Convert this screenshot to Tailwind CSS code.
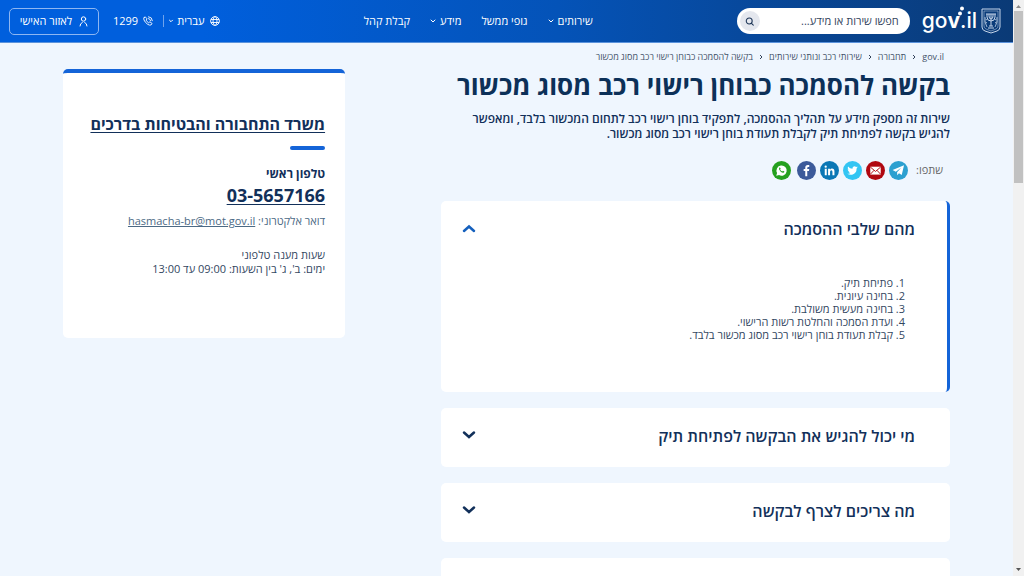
<!DOCTYPE html>
<html lang="he" dir="rtl">
<head>
<meta charset="utf-8">
<meta name="viewport" content="width=device-width, initial-scale=1">
<title>בקשה להסמכה כבוחן רישוי רכב מסוג מכשור</title>
<script src="https://cdn.jsdelivr.net/npm/@tailwindcss/browser@4"></script>
</head>
<body class="flex h-screen overflow-hidden bg-[#eff6fe] font-['Open_Sans','Liberation_Sans',sans-serif] text-[#12305a]">

<!-- Scrollbar -->
<div class="flex w-[11px] shrink-0 flex-col items-center justify-between bg-[#f1f1f1]" aria-hidden="true">
  <div class="flex w-full flex-col items-center">
    <svg class="h-[11px] w-[7px]" viewBox="0 0 7 11"><path d="M1 8l2.500-3 2.500 3z" fill="#8a8a8a"/></svg>
    <div class="h-[172px] w-[9px] bg-[#c1c1c1]"></div>
  </div>
  <svg class="h-[12px] w-[7px]" viewBox="0 0 7 12"><path d="M1 4l2.500 3L6 4z" fill="#555"/></svg>
</div>

<div class="flex min-w-0 flex-1 flex-col">
  <header class="flex h-[43px] shrink-0 items-center border-b border-[#5b93dc] bg-linear-to-l from-[#0a3a76] via-[#0453b8] via-45% to-[#005fdd] to-80% pr-3 pl-[9px] text-[11px] text-white">
    <a href="#" class="flex items-center gap-1" aria-label="gov.il">
      <svg class="h-[26px] w-[20px]" viewBox="0 0 20 26" fill="none" stroke="#c5d5ea" stroke-width="1">
        <path d="M1 1h18v18q0 3-3 4l-6 2-6-2q-3-1-3-4z"/>
        <path d="M3 3h14v15q0 2-2 3l-5 2-5-2q-2-1-2-3z" stroke-width=".5"/>
        <path d="M10 6v12M7 20h6M8 18h4M6 6v3q0 4 4 4t4-4V6M8 6v2q0 3 2 3t2-3V6M5 6h10"/>
        <path d="M4 9q-1 5 2 10M16 9q1 5-2 10M4.500 11l1.500 1M4.500 14l1.500 1M15.500 11L14 12M15.500 14L14 15" stroke-width=".8"/>
      </svg>
      <span dir="ltr" class="relative font-['Inter',sans-serif] text-[21px] leading-[30px] font-medium">go<span class="font-bold">v</span>.il
        <svg class="absolute top-0 left-[32px] h-[12px] w-[14px]" viewBox="0 0 14 12" fill="#fff"><circle cx="8" cy="2.500" r="2"/><circle cx="6" cy="7.500" r="2"/></svg>
      </span>
    </a>
    <form class="mr-3 flex h-[26px] w-[173px] items-center rounded-full bg-white pr-[11px] pl-[3px]">
      <input type="text" aria-label="חיפוש" placeholder="חפשו שירות או מידע..." class="min-w-0 flex-1 text-[11px] text-[#12305a] outline-none placeholder:text-[#33445c]">
      <button type="button" aria-label="חפש" class="flex size-5 items-center justify-center rounded-full bg-[#e4e7ee]">
        <svg class="size-[9px]" viewBox="0 0 10 10" fill="none" stroke="#1d3557" stroke-width="1.200" stroke-linecap="round"><circle cx="4.700" cy="4.500" r="3.300"/><path d="M7.200 7l2 2"/></svg>
      </button>
    </form>
    <nav class="mr-[144px] flex items-center gap-5">
      <button type="button" class="flex items-center gap-1">שירותים
        <svg class="size-[6px]" viewBox="0 0 6 6" fill="none" stroke="#fff" stroke-linecap="round"><path d="M1 2l2 2 2-2"/></svg></button>
      <a href="#">גופי ממשל</a>
      <button type="button" class="flex items-center gap-1">מידע
        <svg class="size-[6px]" viewBox="0 0 6 6" fill="none" stroke="#fff" stroke-linecap="round"><path d="M1 2l2 2 2-2"/></svg></button>
      <a href="#">קבלת קהל</a>
    </nav>
    <div class="mr-auto flex items-center">
      <button type="button" class="flex items-center gap-[5px]">
        <svg class="size-[10px]" viewBox="0 0 10 10" fill="none" stroke="#fff" stroke-width=".9"><circle cx="5" cy="5" r="4.400"/><ellipse cx="5" cy="5" rx="2" ry="4.400"/><path d="M1 3.500h8M1 6.500h8"/></svg>
        <span>עברית</span>
        <svg class="-mr-0.5 size-[6px]" viewBox="0 0 6 6" fill="none" stroke="#fff" stroke-linecap="round"><path d="M1.500 2.200L3 3.700l1.500-1.500"/></svg>
      </button>
      <span class="mr-1 h-3 w-px bg-[#6fa3ec]"></span>
      <a href="#" class="mr-[10px] flex items-center gap-[5px]">
        <svg class="size-[10px]" viewBox="0 0 10 10" fill="none" stroke="#fff" stroke-width=".9" stroke-linecap="round" stroke-linejoin="round"><path d="M1 1.800L2.200.8l1.900 2.100-1 1.200q.8 1.700 2.600 2.700l1.200-1 2.200 1.700-1 1.400q-1.200.7-3.300-.5Q2.200 6.700 1 4 .5 2.500 1 1.800zM5.500.7q3.700.2 3.900 4M5.500 2.600q2 .2 2.100 2.100"/></svg>
        1299</a>
      <a href="#" class="mr-[14px] flex h-[27px] w-[90px] items-center justify-center gap-[7px] rounded-[5px] border border-[#8db6f2]">
        <svg class="h-[11px] w-[9px]" viewBox="0 0 9 11" fill="none" stroke="#fff" stroke-linecap="round"><circle cx="4.500" cy="3" r="2.200"/><path d="M1 10q0-2.600 2.300-3.600M8 10q0-2.600-2.300-3.600"/></svg>
        לאזור האישי</a>
    </div>
  </header>

  <div class="flex items-start justify-between px-[63px]">
    <main class="w-[57.4%] shrink-0">
      <nav aria-label="breadcrumb" class="mt-[6px] pr-[6px] text-[9px] leading-4 whitespace-nowrap text-[#44536a]">
        <ol class="flex items-center gap-[6px]">
          <li><a href="#">gov.il</a></li>
          <li aria-hidden="true"><svg class="h-[6px] w-[4px]" viewBox="0 0 4 6" fill="none" stroke="#34435a"><path d="M1 1l2 2-2 2"/></svg></li>
          <li><a href="#">תחבורה</a></li>
          <li aria-hidden="true"><svg class="h-[6px] w-[4px]" viewBox="0 0 4 6" fill="none" stroke="#34435a"><path d="M1 1l2 2-2 2"/></svg></li>
          <li><a href="#">שירותי רכב ונותני שירותים</a></li>
          <li aria-hidden="true"><svg class="h-[6px] w-[4px]" viewBox="0 0 4 6" fill="none" stroke="#34435a"><path d="M1 1l2 2-2 2"/></svg></li>
          <li>בקשה להסמכה כבוחן רישוי רכב מסוג מכשור</li>
        </ol>
      </nav>
      <h1 class="mt-1 text-[26px] leading-8 font-bold whitespace-nowrap text-[#0c3058]">בקשה להסמכה כבוחן רישוי רכב מסוג מכשור</h1>
      <p class="mt-[10px] text-[12px] leading-[15px] font-semibold whitespace-nowrap text-[#12305a]">שירות זה מספק מידע על תהליך ההסמכה, לתפקיד בוחן רישוי רכב לתחום המכשור בלבד, ומאפשר<br>להגיש בקשה לפתיחת תיק לקבלת תעודת בוחן רישוי רכב מסוג מכשור.</p>

      <div class="mt-[19px] flex h-5 items-center pr-[7px] text-[11px] text-[#666]">
        <span>שתפו:</span>
        <div class="mr-2 flex items-center gap-1">
          <a href="#" aria-label="Telegram"><svg class="size-[19px]" viewBox="0 0 20 20"><circle cx="10" cy="10" r="10" fill="#2ca0d0"/><path d="M15.800 4.500L3.800 9.600l3.400 1.600 5.800-4.300-4.500 5 .2 3 1.800-2 2.900 1.900z" fill="#fff"/></svg></a>
          <a href="#" aria-label="Email"><svg class="size-[19px]" viewBox="0 0 20 20"><circle cx="10" cy="10" r="10" fill="#b00710"/><path d="M4.500 6h11v8.300h-11z" fill="#fff"/><path d="M4.500 6.300L10 11l5.500-4.700M4.500 14l4-4.200M15.500 14l-4-4.200" fill="none" stroke="#b00710"/></svg></a>
          <a href="#" aria-label="Twitter"><svg class="size-[19px]" viewBox="0 0 20 20"><circle cx="10" cy="10" r="10" fill="#33c5f3"/><path d="M15.500 6.700l-1.300.4q.9-.6 1-1.300l-1.400.5q-1.500-1.300-3-.3-1.100.8-.8 2.200-2.800-.1-4.700-2.400-1 1.900.6 3.100l-1-.3q.1 1.800 1.800 2.300l-1 .1q.5 1.300 2 1.500-1.300 1-3.200.9 2.700 1.700 5.800.8 4.100-1.500 4-6.300z" fill="#fff"/></svg></a>
          <a href="#" aria-label="LinkedIn"><svg class="size-[19px]" viewBox="0 0 20 20"><circle cx="10" cy="10" r="10" fill="#0a77b5"/><path d="M5 8.200h2.100V15H5zM8.500 8.200h2v.9q.7-1.100 2.100-1.100 2.600 0 2.600 3v4h-2.100v-3.600q0-1.600-1.200-1.600-1.300 0-1.300 1.600V15H8.500z" fill="#fff"/><circle cx="6" cy="6" r="1.200" fill="#fff"/></svg></a>
          <a href="#" aria-label="Facebook"><svg class="size-[19px]" viewBox="0 0 20 20"><circle cx="10" cy="10" r="10" fill="#3c5a9a"/><path d="M8.700 16v-5.500H7V8.400h1.700V7q0-2.700 2.700-2.700h1.500v2h-1.100q-1 0-1 1v1.100h2.100l-.3 2.100h-1.800V16z" fill="#fff"/></svg></a>
          <a href="#" aria-label="WhatsApp" class="mr-[2px]"><svg class="size-[19px]" viewBox="0 0 20 20"><circle cx="10" cy="10" r="10" fill="#25a01f"/><path d="M4.500 15.500l.8-3a5.400 5.400 0 1 1 2.100 2.200z" fill="#fff"/><path d="M7.500 7.200q.7-1 1.300.1l.3.900-.6.800q.8 1.500 2.300 2.100l.7-.8 1.500.7q.3.500-.6 1.200-1.200.6-3.200-.8Q6.700 9 7.500 7.200z" fill="#25a01f"/></svg></a>
        </div>
      </div>

      <section class="mt-[21px] rounded-[5px] border-r-3 border-[#1464d8] bg-white pr-8 pb-[51px] pl-[21px]">
        <h2><button type="button" aria-expanded="true" class="flex h-[55px] w-full items-center justify-between text-[16px] font-semibold">מהם שלבי ההסמכה
          <svg class="h-[9px] w-[14px]" viewBox="0 0 14 9" fill="none" stroke="#1560bd" stroke-width="2.500" stroke-linecap="round"><path d="M2 7l5-4.500L12 7"/></svg></button></h2>
        <ol class="mt-5 list-inside list-decimal pr-[10px] text-[11px] leading-[13px] text-[#33475f]">
          <li>פתיחת תיק.</li>
          <li>בחינה עיונית.</li>
          <li>בחינה מעשית משולבת.</li>
          <li>ועדת הסמכה והחלטת רשות הרישוי.</li>
          <li>קבלת תעודת בוחן רישוי רכב מסוג מכשור בלבד.</li>
        </ol>
      </section>
      <section class="mt-4 rounded-[5px] bg-white pr-[35px] pl-[21px]">
        <h2><button type="button" aria-expanded="false" class="flex h-[59px] w-full items-center justify-between pb-[3px] text-[16px] font-semibold">מי יכול להגיש את הבקשה לפתיחת תיק
          <svg class="mb-1 h-[9px] w-[14px]" viewBox="0 0 14 9" fill="none" stroke="#12305a" stroke-width="2.500" stroke-linecap="round"><path d="M2 2.500L7 7l5-4.500"/></svg></button></h2>
      </section>
      <section class="mt-4 rounded-[5px] bg-white pr-[35px] pl-[21px]">
        <h2><button type="button" aria-expanded="false" class="flex h-[59px] w-full items-center justify-between pb-[3px] text-[16px] font-semibold">מה צריכים לצרף לבקשה
          <svg class="mb-1 h-[9px] w-[14px]" viewBox="0 0 14 9" fill="none" stroke="#12305a" stroke-width="2.500" stroke-linecap="round"><path d="M2 2.500L7 7l5-4.500"/></svg></button></h2>
      </section>
      <section class="mt-4 h-[59px] rounded-[5px] bg-white"></section>
    </main>

    <aside class="mt-[26px] w-[31.800%] overflow-hidden rounded-[5px] border-t-4 border-[#1464d8] bg-white pr-5 pb-[62px]">
      <h2 class="mt-[39px] text-[16px] leading-6 font-bold whitespace-nowrap"><a href="#" class="underline underline-offset-2">משרד התחבורה והבטיחות בדרכים</a></h2>
      <div class="mt-[10px] h-1 w-[35px] rounded-full bg-[#1464d8]"></div>
      <h3 class="mt-4 text-[12px] leading-4 font-bold">טלפון ראשי</h3>
      <a href="tel:03-5657166" dir="ltr" class="mt-[3px] inline-block text-[18px] leading-5 font-bold underline underline-offset-2">03-5657166</a>
      <p class="mt-[6px] text-[11px] leading-[14px] text-[#4c6a85]">דואר אלקטרוני: <a href="mailto:hasmacha-br@mot.gov.il" class="underline">hasmacha-br@mot.gov.il</a></p>
      <p class="mt-5 text-[11px] leading-[14px] text-[#33475f]">שעות מענה טלפוני<br>ימים: ב', ג' בין השעות: 09:00 עד 13:00</p>
    </aside>
  </div>
</div>
</body>
</html>
